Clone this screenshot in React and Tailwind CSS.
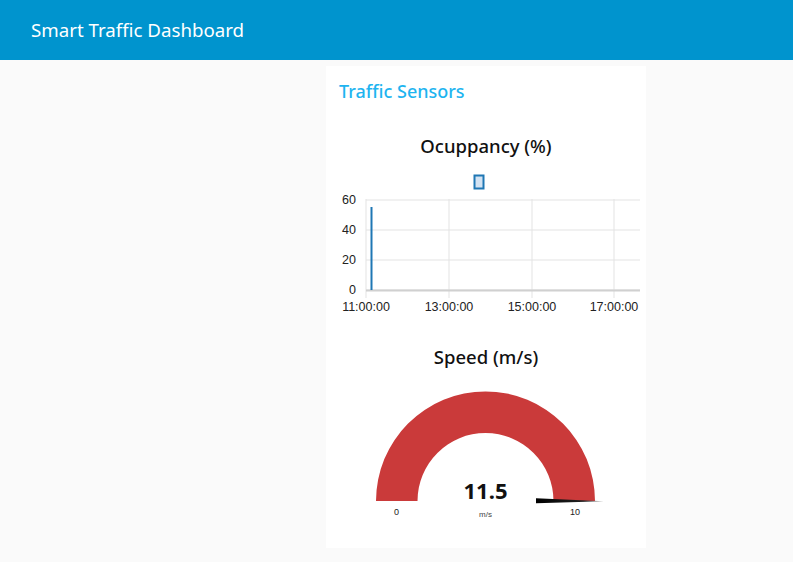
import React from 'react';

const OccupancyChart = () => {
  const yTicks = [
    { label: '60', y: 38 },
    { label: '40', y: 68 },
    { label: '20', y: 98 },
    { label: '0', y: 128 },
  ];
  const xTicks = [
    { label: '11:00:00', x: 40 },
    { label: '13:00:00', x: 123 },
    { label: '15:00:00', x: 206 },
    { label: '17:00:00', x: 288 },
  ];

  return (
    <svg width="320" height="156" viewBox="0 0 320 156" className="block">
      <rect x="148.5" y="13.5" width="9" height="13" fill="#d3e3f3" stroke="#1f77b4" strokeWidth="2" />
      {yTicks.map((t) => (
        <g key={t.label}>
          <line x1="40" x2="314" y1={t.y} y2={t.y} stroke="#e3e3e3" strokeWidth="1" />
          <text
            x="30"
            y={t.y + 4}
            textAnchor="end"
            fontSize="12.5"
            fill="#222"
            fontFamily="'Liberation Sans', Arial, sans-serif"
          >
            {t.label}
          </text>
        </g>
      ))}
      {xTicks.map((t) => (
        <g key={t.label}>
          <line x1={t.x} x2={t.x} y1="37" y2="136" stroke="#e3e3e3" strokeWidth="1" />
          <text
            x={t.x}
            y="149"
            textAnchor="middle"
            fontSize="12.5"
            fill="#222"
            fontFamily="'Liberation Sans', Arial, sans-serif"
          >
            {t.label}
          </text>
        </g>
      ))}
      <line x1="40" x2="314" y1="128.5" y2="128.5" stroke="#d0d0d0" strokeWidth="2" />
      <line x1="45.5" x2="45.5" y1="45" y2="128" stroke="#1f77b4" strokeWidth="2" />
    </svg>
  );
};

const SpeedGauge = ({ value }) => (
  <svg width="320" height="157" viewBox="0 0 320 157" className="block">
    <defs>
      <linearGradient id="needle" x1="0" x2="1" y1="0" y2="0">
        <stop offset="0" stopColor="#000" />
        <stop offset="0.7" stopColor="#222" />
        <stop offset="1" stopColor="#999" />
      </linearGradient>
    </defs>
    <path
      d="M 50 128 A 109.5 109.5 0 0 1 269 128 L 227.5 128 A 68 68 0 0 0 91.5 128 Z"
      fill="#ca3a3a"
    />
    <polygon points="210,125.3 278,128.3 210,130.3" fill="url(#needle)" />
    <text
      x="159.5"
      y="126"
      textAnchor="middle"
      fontSize="22"
      fontWeight="700"
      fill="#111"
      fontFamily="'Noto Sans', 'Open Sans', sans-serif"
    >
      {value}
    </text>
    <text x="159.5" y="144" textAnchor="middle" fontSize="8" fill="#444" fontFamily="'Liberation Sans', Arial, sans-serif">
      m/s
    </text>
    <text x="70.5" y="142" textAnchor="middle" fontSize="9" fill="#222" fontFamily="'Liberation Sans', Arial, sans-serif">
      0
    </text>
    <text x="249" y="142" textAnchor="middle" fontSize="9" fill="#222" fontFamily="'Liberation Sans', Arial, sans-serif">
      10
    </text>
  </svg>
);

const App = () => {
  return (
    <div className="min-h-[562px] bg-[#fafafa] font-['Noto_Sans','Open_Sans',sans-serif]">
      <header className="h-[60px] bg-[#0094ce] flex items-center pl-[31px]">
        <h1 className="text-white text-[18.7px] leading-none">Smart Traffic Dashboard</h1>
      </header>

      <main className="flex pl-[326px] pt-[6px]">
        <div className="w-[320px] bg-white pb-[18px]">
          <div className="h-[50px] flex items-center pl-[13px]">
            <h2 className="text-[#1eb4f0] text-[18px] font-medium">Traffic Sensors</h2>
          </div>

          <div className="mt-[14px] h-[32px] flex items-center justify-center">
            <h3 className="text-[#111] text-[18.5px] font-medium">Ocuppancy (%)</h3>
          </div>
          <OccupancyChart />

          <div className="mt-[23px] h-[32px] flex items-center justify-center">
            <h3 className="text-[#111] text-[18.5px] font-medium">Speed (m/s)</h3>
          </div>
          <SpeedGauge value="11.5" />
        </div>
      </main>
    </div>
  );
};

export default App;
